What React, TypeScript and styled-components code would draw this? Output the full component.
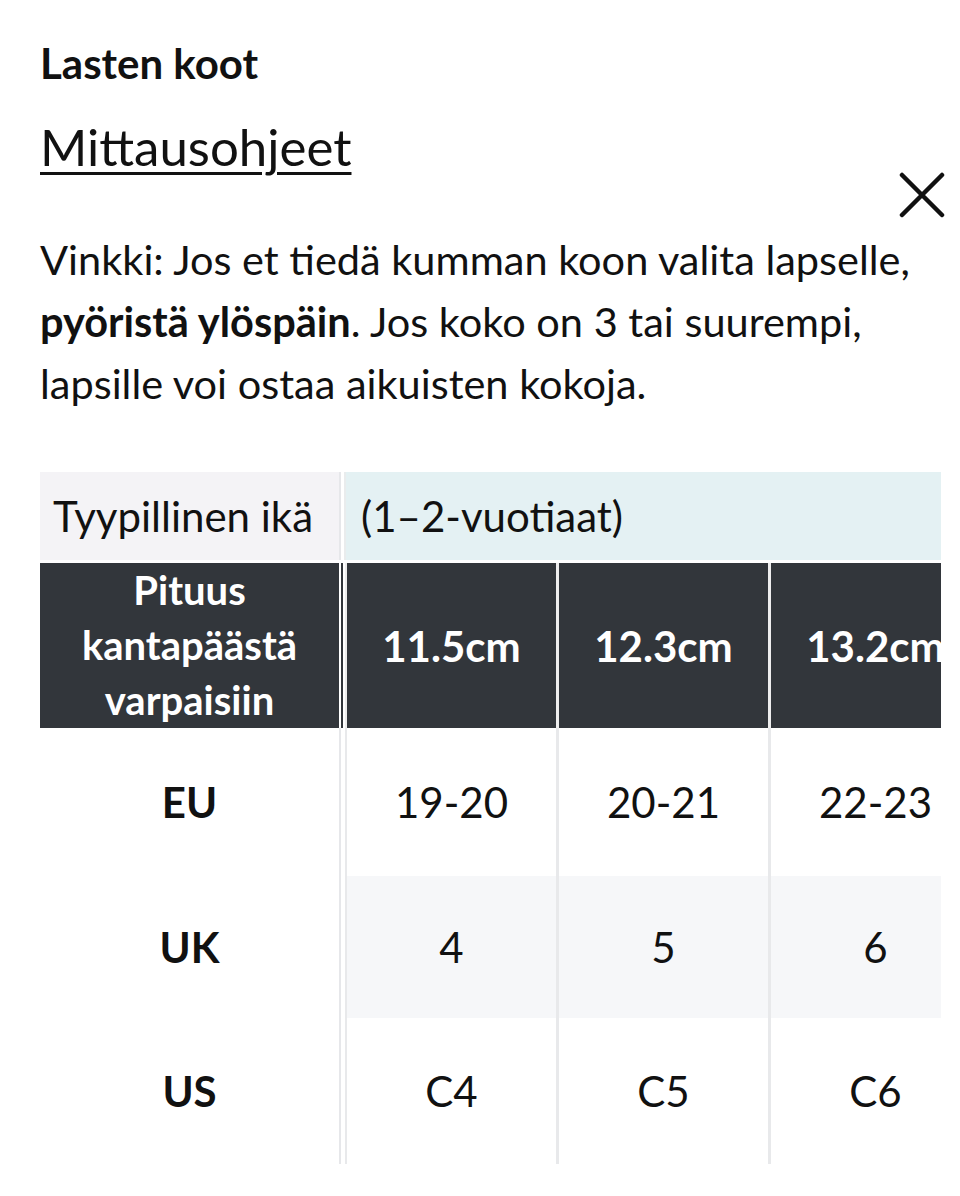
import React from 'react';
import styled, { createGlobalStyle } from 'styled-components';

const GlobalStyle = createGlobalStyle`
  html, body {
    margin: 0;
    padding: 0;
    background: #ffffff;
  }

  body {
    font-family: Lato, "Noto Sans", sans-serif;
    color: #111111;
  }
`;

const Sheet = styled.div`
  padding: 0 19px 0 40px;
  overflow: hidden;
`;

const Header = styled.div`
  display: flex;
  justify-content: space-between;
  align-items: flex-start;
`;

const HeaderText = styled.div`
  display: flex;
  flex-direction: column;
  align-items: flex-start;
`;

const Title = styled.h2`
  margin: 39px 0 0;
  font-size: 42px;
  line-height: 48px;
  font-weight: 700;
`;

const GuideLink = styled.a`
  margin-top: 30px;
  font-size: 51px;
  line-height: 60px;
  color: #111111;
  text-decoration: underline;
  text-decoration-thickness: 3px;
  text-underline-offset: 6px;
`;

const CloseButton = styled.button`
  margin: 170px -6px 0 0;
  padding: 0;
  width: 50px;
  height: 50px;
  border: none;
  background: none;
  cursor: pointer;
  display: flex;
  align-items: center;
  justify-content: center;
`;

const Tip = styled.p`
  margin: 8px 0 0;
  font-size: 41.5px;
  line-height: 62px;

  strong {
    font-weight: 700;
  }
`;

const TableFrame = styled.div`
  margin-top: 58px;
  overflow: hidden;
  padding-bottom: 32px;
`;

const Row = styled.div<{ $height: number; $gap?: number }>`
  display: flex;
  height: ${(p) => p.$height}px;
  margin-top: ${(p) => p.$gap ?? 0}px;
`;

type Tone = 'age' | 'head' | 'body' | 'stripe';

const leadBg: Record<Tone, string> = {
  age: '#f4f3f6',
  head: '#32363b',
  body: '#ffffff',
  stripe: '#ffffff',
};

const cellBg: Record<Tone, string> = {
  age: '#e4f1f3',
  head: '#32363b',
  body: '#ffffff',
  stripe: '#f6f7f9',
};

const LeadCell = styled.div<{ $tone: Tone }>`
  flex: none;
  box-sizing: border-box;
  width: 301px;
  display: flex;
  align-items: center;
  justify-content: ${(p) => (p.$tone === 'age' ? 'flex-start' : 'center')};
  padding-left: ${(p) => (p.$tone === 'age' ? '13px' : '0')};
  text-align: center;
  background: ${(p) => leadBg[p.$tone]};
  border-right: 2px solid ${(p) => (p.$tone === 'head' ? '#ffffff' : '#e6e7ea')};
  box-shadow: ${(p) => (p.$tone === 'head' ? '2px 0 0 #32363b' : 'none')};
  margin-right: 3px;
  font-size: ${(p) => (p.$tone === 'head' ? '40px' : '42px')};
  font-weight: ${(p) => (p.$tone === 'age' ? 400 : 700)};
  color: ${(p) => (p.$tone === 'head' ? '#ffffff' : '#111111')};
  line-height: ${(p) => (p.$tone === 'head' ? '55px' : '48px')};
  white-space: nowrap;
`;

const AgeCell = styled.div`
  flex: 1;
  min-width: 700px;
  display: flex;
  align-items: center;
  padding-left: 15px;
  background: ${cellBg.age};
  border-left: 2px solid #e9eced;
  font-size: 42px;
`;

const DataCell = styled.div<{ $tone: Tone; $first?: boolean }>`
  flex: none;
  width: 209px;
  display: flex;
  align-items: center;
  justify-content: center;
  background: ${(p) => cellBg[p.$tone]};
  border-left: ${(p) => (p.$first ? 2 : 3)}px solid
    ${(p) => (p.$tone === 'head' ? '#eeeeee' : '#e8e9eb')};
  margin-left: ${(p) => (p.$first ? 1 : 0)}px;
  font-size: 42px;
  font-weight: ${(p) => (p.$tone === 'head' ? 700 : 400)};
  color: ${(p) => (p.$tone === 'head' ? '#ffffff' : '#111111')};
  white-space: nowrap;
`;

const lengths = ['11.5cm', '12.3cm', '13.2cm', '14.0cm'];

const systems: { label: string; values: string[]; height: number; tone: Tone }[] = [
  { label: 'EU', values: ['19-20', '20-21', '22-23', '24'], height: 148, tone: 'body' },
  { label: 'UK', values: ['4', '5', '6', '7'], height: 142, tone: 'stripe' },
  { label: 'US', values: ['C4', 'C5', 'C6', 'C7'], height: 146, tone: 'body' },
];

const CloseIcon = () => (
  <svg width="46" height="46" viewBox="0 0 46 46" fill="none">
    <path d="M3 3L43 43M43 3L3 43" stroke="#111111" strokeWidth="4.5" strokeLinecap="round" />
  </svg>
);

const App: React.FC = () => {
  return (
    <>
      <GlobalStyle />
      <Sheet>
        <Header>
          <HeaderText>
            <Title>Lasten koot</Title>
            <GuideLink href="#">Mittausohjeet</GuideLink>
          </HeaderText>
          <CloseButton aria-label="Sulje">
            <CloseIcon />
          </CloseButton>
        </Header>

        <Tip>
          Vinkki: Jos et tiedä kumman koon valita lapselle, <strong>pyöristä ylöspäin</strong>. Jos koko on 3 tai
          suurempi, lapsille voi ostaa aikuisten kokoja.
        </Tip>

        <TableFrame>
          <Row $height={88}>
            <LeadCell $tone="age">Tyypillinen ikä</LeadCell>
            <AgeCell>(1–2-vuotiaat)</AgeCell>
          </Row>
          <Row $height={165} $gap={3}>
            <LeadCell $tone="head">
              Pituus
              <br />
              kantapäästä
              <br />
              varpaisiin
            </LeadCell>
            {lengths.map((len, i) => (
              <DataCell key={len} $tone="head" $first={i === 0}>
                {len}
              </DataCell>
            ))}
          </Row>
          {systems.map((s) => (
            <Row key={s.label} $height={s.height}>
              <LeadCell $tone={s.tone}>{s.label}</LeadCell>
              {s.values.map((v, i) => (
                <DataCell key={i} $tone={s.tone} $first={i === 0}>
                  {v}
                </DataCell>
              ))}
            </Row>
          ))}
        </TableFrame>
      </Sheet>
    </>
  );
};

export default App;
